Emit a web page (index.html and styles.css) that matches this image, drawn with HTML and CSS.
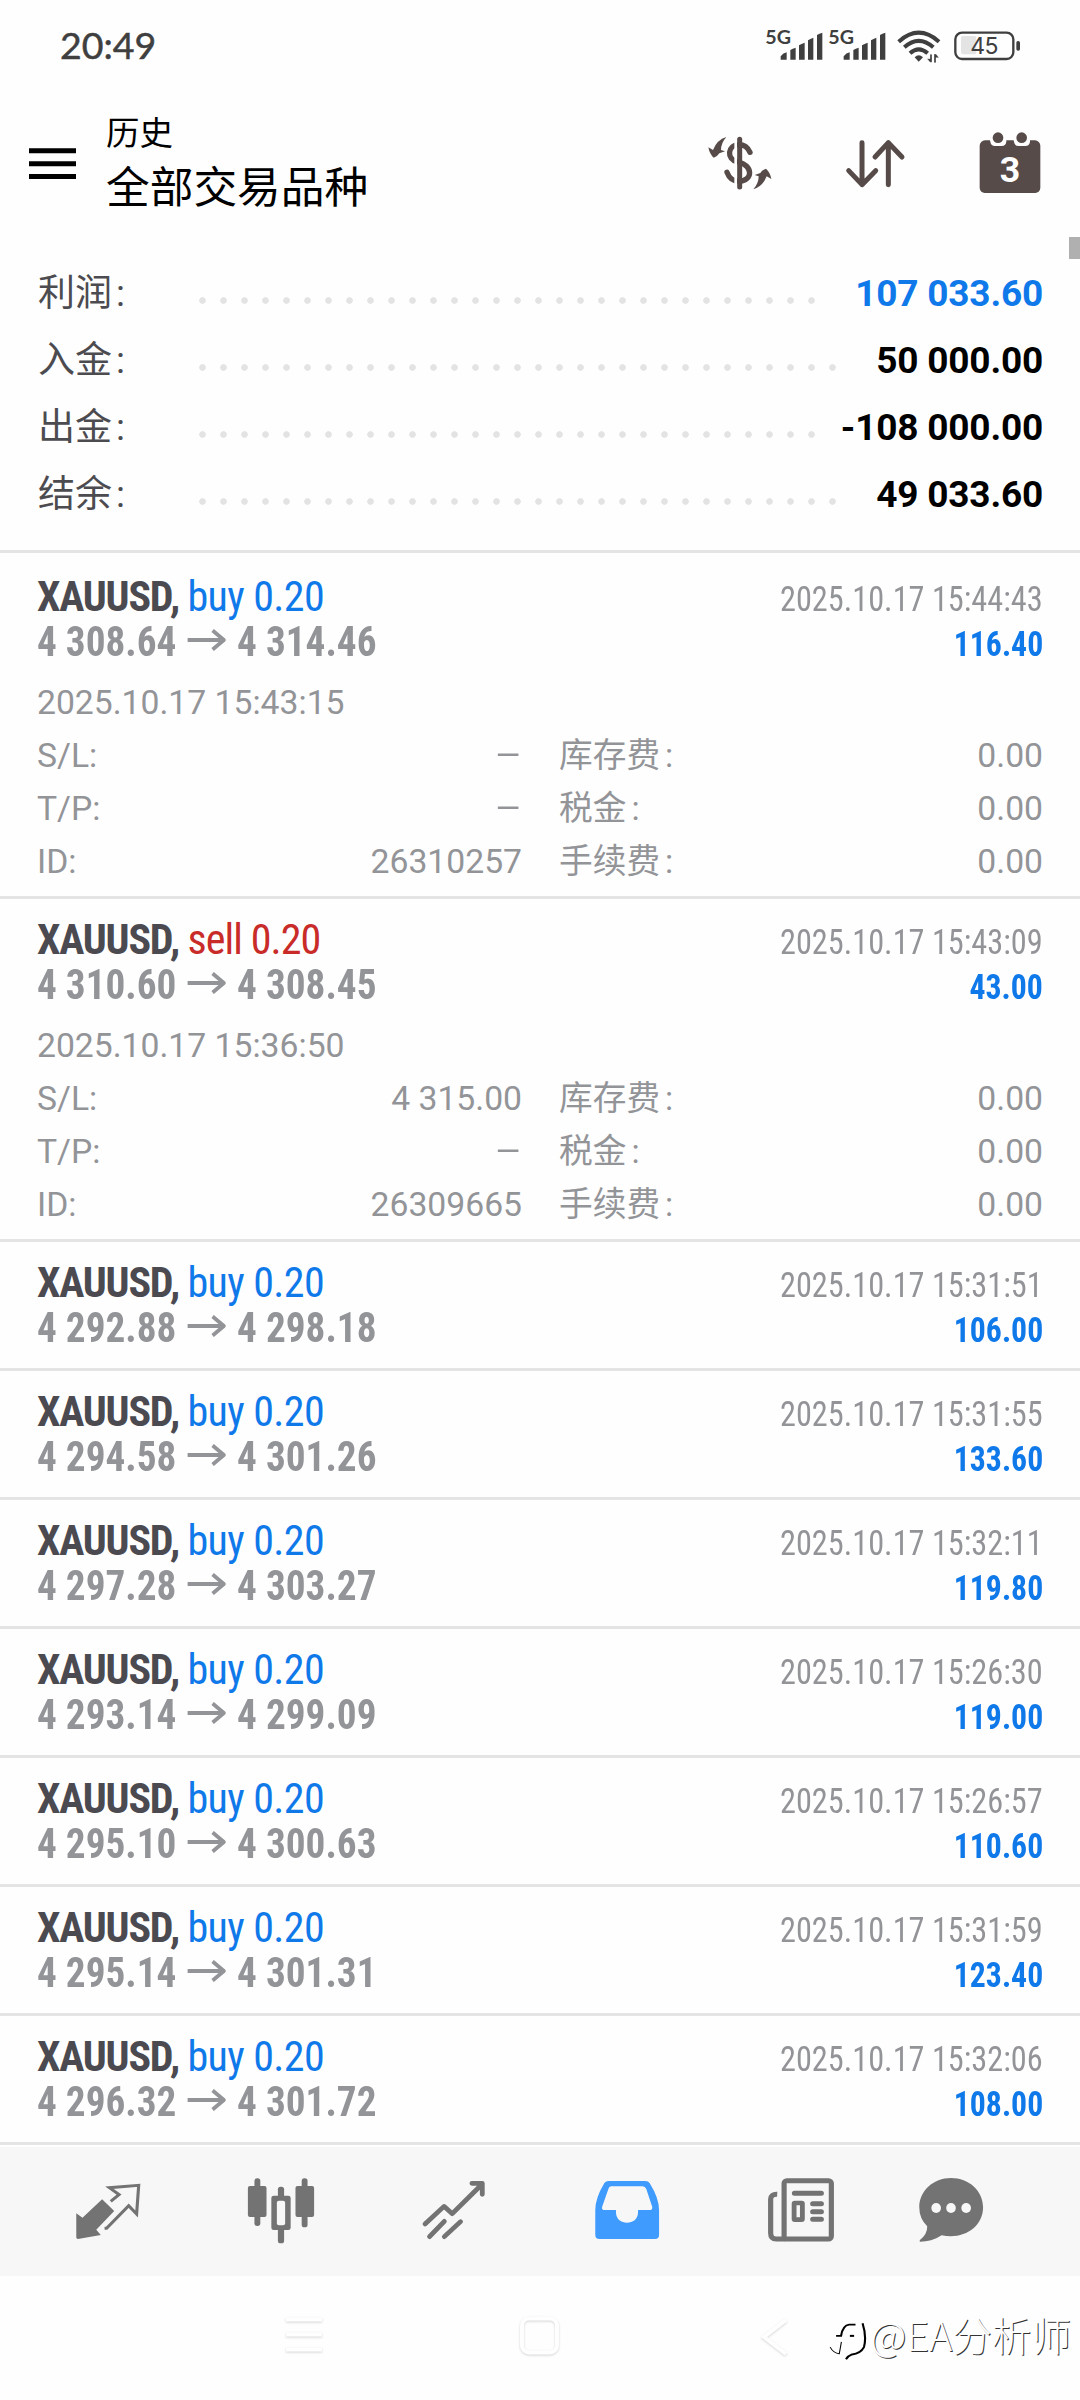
FILE: index.html
```html
<!DOCTYPE html>
<html lang="zh-CN">
<head>
<meta charset="utf-8">
<title>历史</title>
<link rel="stylesheet" href="styles.css">
</head>
<body>
<div class="screen">
  <div class="status">
    <span class="clock">20:49</span>
    <svg class="status-icons" viewBox="252 80 774 120" fill="#3f3f3f">
      <g id="signal">
        <text x="256" y="132" class="net">5G</text>
        <path d="M302 178V168Q310 158 320 156V178ZM331 178V149Q338 144 347 142V178ZM357 178V135Q364 130 374 127V178ZM384 178V120Q391 115 400 112V178ZM411 178V104Q418 99 427 97V178Z"/>
      </g>
      <use href="#signal" x="189"/>
      <g fill="none" stroke="#3f3f3f" stroke-width="12">
        <path d="M656 124Q716 70 777 124"/>
        <path d="M673 141Q716 102 760 141"/>
        <path d="M690 159Q716 135 743 159"/>
      </g>
      <path d="M704 171Q716 158 729 171L716 184Z"/>
      <path d="M750 162H756V186H750L741 175H750ZM762 187V161H768L777 172H768V187Z" stroke="#fff" stroke-width="1"/>
      <rect x="843" y="107" width="46" height="55" rx="6" fill="#e4e4e4"/>
      <rect x="826" y="97" width="174" height="79" rx="20" fill="none" stroke="#3f3f3f" stroke-width="7"/>
      <rect x="1009" y="122" width="11" height="29" rx="5"/>
      <text x="912" y="162" text-anchor="middle" class="battery">45</text>
    </svg>
  </div>

  <header class="header">
    <svg class="menu" viewBox="0 0 47 31"><path d="M0 2.7H47M0 15.7H47M0 28.5H47" stroke="#000" stroke-width="5"/></svg>
    <div class="titles">
      <div class="title-small">历史</div>
      <div class="title-large">全部交易品种</div>
    </div>
    <svg class="action action-money" viewBox="50 40 200 180">
      <path d="M179 98C172 82 160 75 146 75C112 75 106 118 142 127C190 136 188 184 146 185C126 185 116 174 110 158" fill="none" stroke="#564b48" stroke-width="16" stroke-linecap="round"/>
      <path d="M136 50V215" stroke="#fff" stroke-width="8"/>
      <path d="M148 59V202" stroke="#564b48" stroke-width="15" stroke-linecap="round"/>
      <g fill="#564b48">
        <path id="swap" d="M108 52Q92 70 92 91L104 95L87 101Q82 110 70 114Q58 104 54 83L68 91Q80 60 108 52Z"/>
        <use href="#swap" transform="rotate(180 148.5 130.5)"/>
      </g>
    </svg>
    <svg class="action action-sort" viewBox="490 410 194 160"><path d="M547 427V553M507 511L547 553L588 511M626 553V427M586 470L626 427L667 470" fill="none" stroke="#564b48" stroke-width="15" stroke-linecap="round" stroke-linejoin="round"/></svg>
    <svg class="action action-date" viewBox="898 392 186 188">
      <rect x="900" y="420" width="182" height="158" rx="16" fill="#564b48"/>
      <path d="M930 416H980V424Q978 437 966 437H946Q934 437 932 424ZM1001 416H1051V424Q1049 437 1037 437H1017Q1005 437 1003 424Z" fill="#fff"/>
      <circle cx="955" cy="412" r="16" fill="#564b48"/><circle cx="1026" cy="412" r="16" fill="#564b48"/>
      <text x="991" y="545" text-anchor="middle" class="day">3</text>
    </svg>
  </header>
  <div class="scroll-thumb"></div>

  <section class="summary">
    <div class="sum-row"><span class="sum-label">利润<i>:</i></span><span class="dots"></span><b class="blue">107 033.60</b></div>
    <div class="sum-row"><span class="sum-label">入金<i>:</i></span><span class="dots dots-long"></span><b>50 000.00</b></div>
    <div class="sum-row"><span class="sum-label">出金<i>:</i></span><span class="dots"></span><b>-108 000.00</b></div>
    <div class="sum-row"><span class="sum-label">结余<i>:</i></span><span class="dots dots-long"></span><b>49 033.60</b></div>
  </section>

  <main class="deals">
    <article class="deal first">
      <div class="line"><span class="symbol">XAUUSD, <span class="blue">buy 0.20</span></span><span class="time">2025.10.17 15:44:43</span></div>
      <div class="line"><span class="prices">4 308.64<svg class="arrow" viewBox="0 0 41 22"><path d="M0 11H39M27 1.5L39 11L27 20.5"/></svg>4 314.46</span><span class="profit">116.40</span></div>
      <div class="details">
        <div class="full">2025.10.17 15:43:15</div>
        <div class="pair"><span>S/L:</span><span class="dash">–</span></div><div class="pair"><span>库存费<i>:</i></span><span>0.00</span></div>
        <div class="pair"><span>T/P:</span><span class="dash">–</span></div><div class="pair"><span>税金<i>:</i></span><span>0.00</span></div>
        <div class="pair"><span>ID:</span><span>26310257</span></div><div class="pair"><span>手续费<i>:</i></span><span>0.00</span></div>
      </div>
    </article>
    <article class="deal">
      <div class="line"><span class="symbol">XAUUSD, <span class="red">sell 0.20</span></span><span class="time">2025.10.17 15:43:09</span></div>
      <div class="line"><span class="prices">4 310.60<svg class="arrow" viewBox="0 0 41 22"><path d="M0 11H39M27 1.5L39 11L27 20.5"/></svg>4 308.45</span><span class="profit">43.00</span></div>
      <div class="details">
        <div class="full">2025.10.17 15:36:50</div>
        <div class="pair"><span>S/L:</span><span>4 315.00</span></div><div class="pair"><span>库存费<i>:</i></span><span>0.00</span></div>
        <div class="pair"><span>T/P:</span><span class="dash">–</span></div><div class="pair"><span>税金<i>:</i></span><span>0.00</span></div>
        <div class="pair"><span>ID:</span><span>26309665</span></div><div class="pair"><span>手续费<i>:</i></span><span>0.00</span></div>
      </div>
    </article>
    <article class="deal">
      <div class="line"><span class="symbol">XAUUSD, <span class="blue">buy 0.20</span></span><span class="time">2025.10.17 15:31:51</span></div>
      <div class="line"><span class="prices">4 292.88<svg class="arrow" viewBox="0 0 41 22"><path d="M0 11H39M27 1.5L39 11L27 20.5"/></svg>4 298.18</span><span class="profit">106.00</span></div>
    </article>
    <article class="deal">
      <div class="line"><span class="symbol">XAUUSD, <span class="blue">buy 0.20</span></span><span class="time">2025.10.17 15:31:55</span></div>
      <div class="line"><span class="prices">4 294.58<svg class="arrow" viewBox="0 0 41 22"><path d="M0 11H39M27 1.5L39 11L27 20.5"/></svg>4 301.26</span><span class="profit">133.60</span></div>
    </article>
    <article class="deal">
      <div class="line"><span class="symbol">XAUUSD, <span class="blue">buy 0.20</span></span><span class="time">2025.10.17 15:32:11</span></div>
      <div class="line"><span class="prices">4 297.28<svg class="arrow" viewBox="0 0 41 22"><path d="M0 11H39M27 1.5L39 11L27 20.5"/></svg>4 303.27</span><span class="profit">119.80</span></div>
    </article>
    <article class="deal">
      <div class="line"><span class="symbol">XAUUSD, <span class="blue">buy 0.20</span></span><span class="time">2025.10.17 15:26:30</span></div>
      <div class="line"><span class="prices">4 293.14<svg class="arrow" viewBox="0 0 41 22"><path d="M0 11H39M27 1.5L39 11L27 20.5"/></svg>4 299.09</span><span class="profit">119.00</span></div>
    </article>
    <article class="deal">
      <div class="line"><span class="symbol">XAUUSD, <span class="blue">buy 0.20</span></span><span class="time">2025.10.17 15:26:57</span></div>
      <div class="line"><span class="prices">4 295.10<svg class="arrow" viewBox="0 0 41 22"><path d="M0 11H39M27 1.5L39 11L27 20.5"/></svg>4 300.63</span><span class="profit">110.60</span></div>
    </article>
    <article class="deal">
      <div class="line"><span class="symbol">XAUUSD, <span class="blue">buy 0.20</span></span><span class="time">2025.10.17 15:31:59</span></div>
      <div class="line"><span class="prices">4 295.14<svg class="arrow" viewBox="0 0 41 22"><path d="M0 11H39M27 1.5L39 11L27 20.5"/></svg>4 301.31</span><span class="profit">123.40</span></div>
    </article>
    <article class="deal">
      <div class="line"><span class="symbol">XAUUSD, <span class="blue">buy 0.20</span></span><span class="time">2025.10.17 15:32:06</span></div>
      <div class="line"><span class="prices">4 296.32<svg class="arrow" viewBox="0 0 41 22"><path d="M0 11H39M27 1.5L39 11L27 20.5"/></svg>4 301.72</span><span class="profit">108.00</span></div>
    </article>
  </main>

  <nav class="tabs">
    <svg viewBox="196 120 232 240" preserveAspectRatio="none" fill="#737373">
      <path d="M295 208L330 243L278 299L291 315L225 327Q220 327 220 322V250L238 263Z"/>
      <path d="M320 214L344 194L316 173L401 166L395 252L372 227L308 295H302" fill="none" stroke="#737373" stroke-width="9"/>
    </svg>
    <svg viewBox="697 120 232 240" preserveAspectRatio="none" fill="#737373">
      <rect x="717" y="168" width="54" height="93" rx="6"/><rect x="736" y="145" width="17" height="143" rx="8"/>
      <rect x="855" y="168" width="54" height="93" rx="6"/><rect x="873" y="145" width="17" height="147" rx="8"/>
      <rect x="804" y="170" width="18" height="170" rx="8"/><rect x="785" y="197" width="56" height="103" rx="7"/><rect x="801" y="212" width="24" height="74" rx="6" fill="#f7f7f7"/>
    </svg>
    <svg viewBox="1200 120 232 240" preserveAspectRatio="none" fill="none" stroke="#737373" stroke-width="14" stroke-linecap="round" stroke-linejoin="round">
      <path d="M1232 282L1287 229L1311 251L1395 165M1368 160H1398V193M1245 320L1288 274M1288 320L1335 275"/>
    </svg>
    <svg viewBox="137 120 232 240" preserveAspectRatio="none">
      <path d="M200 153H306Q315 153 319 160Q346 205 346 240V315Q346 327 334 327H173Q161 327 161 315V240Q161 205 187 160Q191 153 200 153Z" fill="#409bff"/>
      <path d="M207 169H298Q306 169 309 177L326 230Q328 240 318 240H285V247C285 289 221 289 221 247V240H189Q178 240 181 230L199 177Q201 169 207 169Z" fill="#f7f7f7"/>
    </svg>
    <svg viewBox="643 120 232 240" preserveAspectRatio="none" fill="none" stroke="#737373" stroke-width="15">
      <rect x="710" y="152" width="137" height="175" rx="8"/>
      <path d="M690 193Q671 192 671 208V309Q671 327 687 327H715"/>
      <path d="M740 190H818M793 221H818M793 245H818M793 268H818" stroke-linecap="round"/>
      <rect x="739" y="219" width="24" height="50" rx="2" stroke-width="14"/>
    </svg>
    <svg viewBox="1077 120 232 240" preserveAspectRatio="none" fill="#737373">
      <path d="M1193 144C1245 144 1286 182 1286 232C1286 292 1229 330 1166 316C1145 330 1125 335 1104 335Q1100 335 1103 330Q1125 312 1124 289Q1101 266 1101 232C1101 182 1142 144 1193 144Z"/>
      <g fill="#f7f7f7"><ellipse cx="1150" cy="234" rx="14" ry="15"/><ellipse cx="1193" cy="234" rx="14" ry="15"/><ellipse cx="1237" cy="234" rx="14" ry="15"/></g>
    </svg>
  </nav>

  <div class="system-nav">
    <svg viewBox="0 0 60 60"><path d="M12 12.5H48M12 27.5H48M12 42.5H48" stroke-width="4"/></svg>
    <svg viewBox="0 0 60 60"><rect x="13" y="11.500" width="35" height="34" rx="7" stroke-width="4"/></svg>
    <svg viewBox="0 0 60 60"><path d="M42 13L20 30L42 47" stroke-width="4"/></svg>
    <div class="watermark">
      <svg viewBox="840 580 112 124" preserveAspectRatio="none" fill="none" stroke="#000">
        <path d="M863 628H877Q882 596 900 594H918" stroke-width="6"/>
        <path d="M902 628H914" stroke-width="6"/>
        <path d="M938 590Q950 630 942 662Q932 682 908 684Q897 688 891 699" stroke-width="6"/>
        <path d="M846 662Q856 681 872 682L878 646" stroke-width="3"/>
      </svg>
      <span>@EA分析师</span>
    </div>
  </div>
</div>
</body>
</html>
```
FILE: styles.css
```css
* { box-sizing: border-box; }
body {
  margin: 0;
  background: #fefefe;
  color: #000;
  font-family: Roboto, "Noto Sans CJK SC", sans-serif;
}
i { font-style: normal; }
svg { display: block; flex: none; }
.screen { position: relative; width: 1080px; height: 2400px; overflow: hidden; }
.blue { color: #1079ea; }
.red { color: #c82b28; }

.status { display: flex; justify-content: space-between; height: 90px; padding: 0 58px 0 60px; }
.clock {
  font: 400 37.5px/50px Lato, sans-serif;
  margin-top: 20px;
  color: #3f3f3f;
  -webkit-text-stroke: .5px #3f3f3f;
}
.status-icons { width: 258px; height: 40px; margin-top: 26.5px; overflow: visible; }
.net { font: 700 59px Lato, sans-serif; }
.battery { font: 400 69px Inter, sans-serif; letter-spacing: -2px; }

.header { display: flex; height: 170px; padding-left: 29px; }
.menu { width: 47px; height: 31px; margin-top: 58px; }
.titles { margin-left: 30px; padding-top: 19px; flex: 1; }
.title-small { font-size: 33.5px; line-height: 50px; }
.title-large { font-size: 43.7px; line-height: 58px; }
.action-money { width: 66.7px; height: 60px; margin-top: 43.3px; }
.action-sort { width: 64.7px; height: 53.3px; margin: 46.7px 0 0 70px; }
.action-date { width: 62px; height: 62.7px; margin: 40.7px 39px 0 71px; }
.day { font: 700 107px Roboto, sans-serif; fill: #fff; }
.scroll-thumb { position: absolute; right: 0; top: 237px; width: 11px; height: 22px; background: #b0b0b0; }

.summary { height: 290px; padding: 0 37px 0 38px; font-size: 37px; }
.sum-row { display: flex; height: 67px; line-height: 67px; }
.sum-row b { margin-left: auto; font-weight: 700; letter-spacing: -.2px; }
.sum-label { width: 154px; color: #4c4b50; }
.sum-label i { margin-left: 4px; }
.dots {
  width: 630px;
  height: 21px;
  margin-top: 30px;
  background: radial-gradient(circle, #e3e3e3 2.900px, transparent 3.700px) 0 0 / 21px 21px;
}
.dots-long { width: 651px; }

.deal { border-top: 3px solid #e4e4e4; padding: 18px 37px 0; height: 129px; }
.deal:has(.details) { height: 343px; }
.deal.first { padding-top: 21px; height: 346px; }
.line {
  display: flex;
  justify-content: space-between;
  align-items: baseline;
  height: 45px;
  line-height: 45px;
  font-family: "Roboto Condensed", Roboto, sans-serif;
  white-space: nowrap;
}
.symbol, .prices { font-size: 42px; font-weight: 700; }
.symbol { color: #4b4a50; letter-spacing: -1.200px; }
.symbol span { font-weight: 400; letter-spacing: -.6px; }
.symbol .red { letter-spacing: -.9px; }
.prices { color: #939498; transform: scaleX(.934); transform-origin: left; }
.arrow { display: inline-block; width: 41px; height: 22px; margin: 0 12px 0 12px; vertical-align: 5px; }
.arrow path { fill: none; stroke: #939498; stroke-width: 4; }
.time, .profit { font-size: 34.5px; transform: scaleX(.936); transform-origin: right; }
.time { color: #939498; }
.profit { font-weight: 700; color: #1079ea; transform: scaleX(.92); }
.details {
  display: grid;
  grid-template-columns: 485px 484px;
  column-gap: 37px;
  grid-auto-rows: 53px;
  margin-top: 12px;
  font-size: 33.7px;
  line-height: 53px;
  color: #939498;
}
.full { grid-column: 1 / -1; }
.pair { display: flex; justify-content: space-between; }
.pair i { margin-left: 5px; }
.dash { transform: scaleX(1.25); transform-origin: right; }

.tabs {
  display: flex;
  gap: 93.3px;
  height: 134px;
  padding: 25px 0 0 67.500px;
  border-top: 3px solid #e4e4e4;
  background: linear-gradient(#fefefe 2px, #f7f7f7 2px);
}
.tabs svg { width: 80px; height: 80px; }
.tabs svg:last-child { margin-left: -23px; }

.system-nav { position: relative; display: flex; gap: 175px; padding: 31px 0 0 274px; }
.system-nav > svg {
  width: 60px;
  height: 60px;
  fill: none;
  stroke: #fefefe;
  filter: drop-shadow(0 1.5px 1px rgba(0, 0, 0, .16));
}
.watermark { position: absolute; right: 9px; top: 30px; display: flex; align-items: flex-start; gap: 3px; }
.watermark svg { width: 39.5px; height: 41px; margin-top: 14px; }
.watermark span {
  font: 300 39.600px/56px "Noto Sans CJK SC", sans-serif;
  color: #fff;
  text-shadow: 1px 1px 0 #333;
}
```
